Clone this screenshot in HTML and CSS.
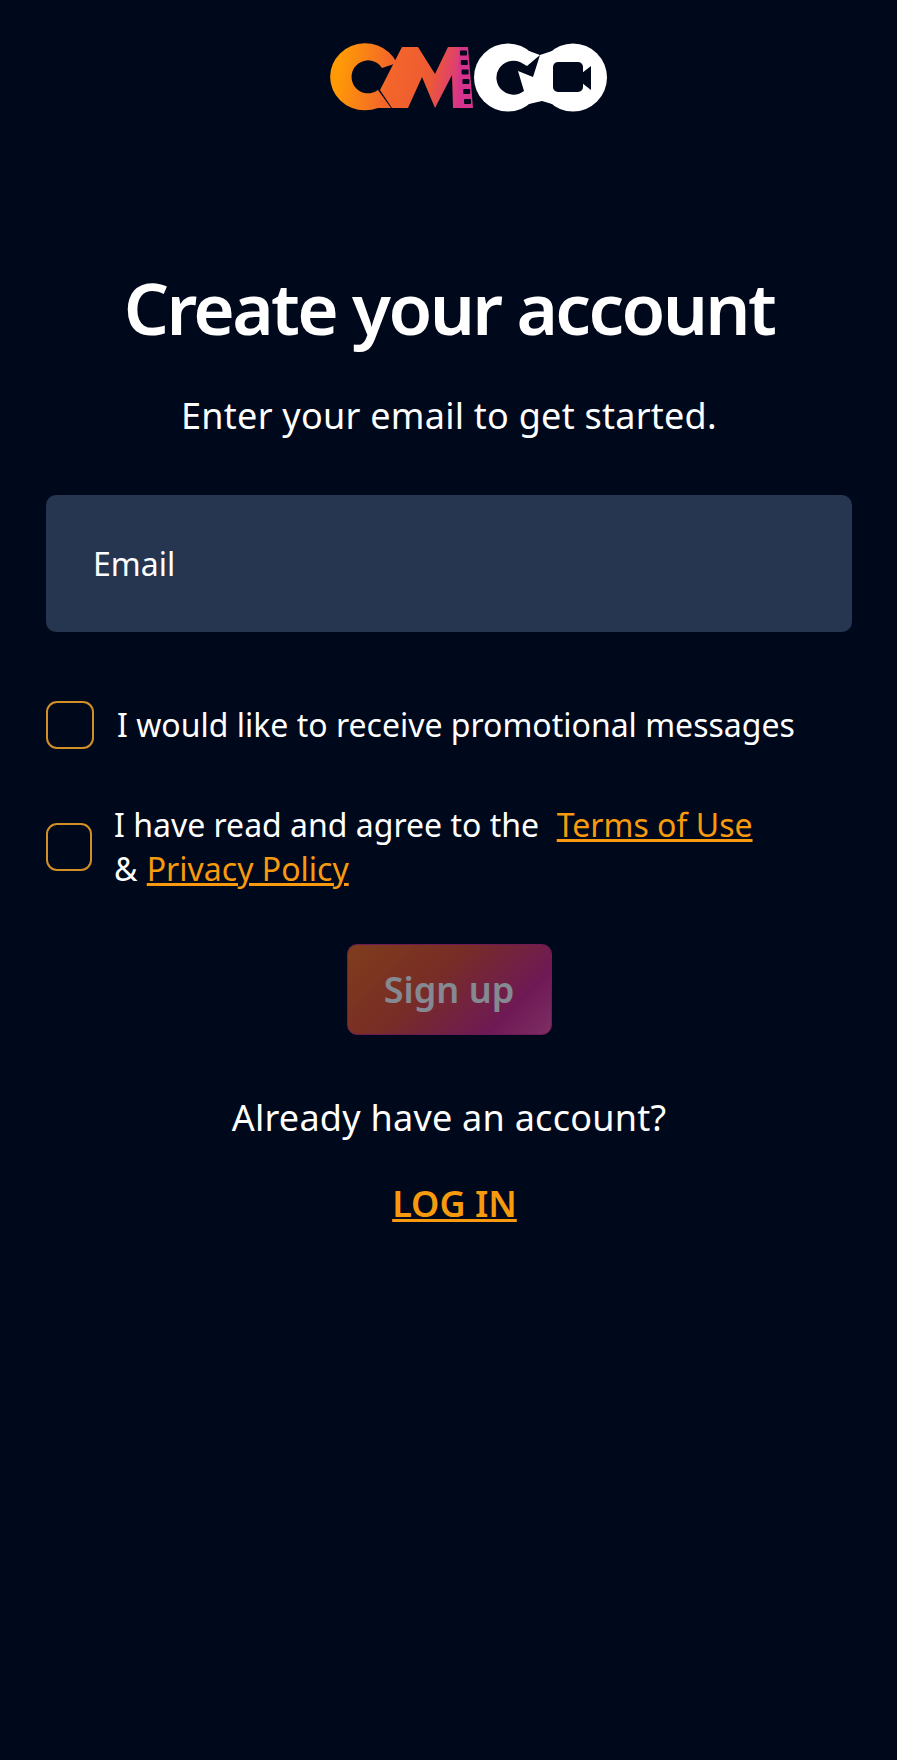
FILE: index.html
```html
<!DOCTYPE html>
<html lang="en">
<head>
<meta charset="utf-8">
<title>Create your account</title>
<link rel="stylesheet" href="styles.css">
</head>
<body>
<main class="page">
  <header class="logo-row">
    <svg class="logo" width="278" height="70" viewBox="0 0 278 70" role="img" aria-label="CMGO">
      <defs>
        <linearGradient id="lg" gradientUnits="userSpaceOnUse" x1="10" y1="20" x2="134" y2="42">
          <stop offset="0" stop-color="#ff9a05"/>
          <stop offset="0.4" stop-color="#f3662a"/>
          <stop offset="0.72" stop-color="#ee5a33"/>
          <stop offset="1" stop-color="#d6338c"/>
        </linearGradient>
      </defs>
      <path fill="url(#lg)" d="M67 20A35 33.500 0 1 0 48 65L61 65L48 47A16.500 16.500 0 1 1 52 25Z"/>
      <path fill="url(#lg)" d="M72 4H88L105 31L118 4H131V65H123L122 32L105 65L92 34L78 65H62L50 47Z"/>
      <path class="strip" d="M129 4H138L143 65H128Z"/>
      <g class="logo-cut">
        <rect x="130" y="7.500" width="7" height="5" rx="1"/>
        <rect x="130.800" y="17" width="7" height="5" rx="1"/>
        <rect x="131.600" y="26.500" width="7" height="5" rx="1"/>
        <rect x="132.400" y="36" width="7" height="5" rx="1"/>
        <rect x="133.200" y="46" width="7" height="5" rx="1"/>
        <rect x="134" y="56" width="7" height="5" rx="1"/>
      </g>
      <g class="logo-white">
        <circle cx="178" cy="34.500" r="34"/>
        <circle cx="243" cy="34.500" r="34"/>
        <path d="M199 8L210 12L222 8V61L212 58L199 61Z"/>
      </g>
      <g class="logo-cut">
        <path d="M194 48A17 17 0 1 1 190 19L197 23L210 12L203 34L188 28Z"/>
        <rect x="223" y="19" width="30" height="30" rx="5"/>
        <path d="M252 30L261 23V47L252 40Z"/>
      </g>
    </svg>
  </header>

  <h1 class="title">Create your account</h1>
  <p class="subtitle">Enter your email to get started.</p>

  <form class="form">
    <div class="field"><span class="field-label">Email</span></div>

    <div class="check-row check-row-one">
      <span class="box box-one"></span>
      <span class="check-text">I would like to receive promotional messages</span>
    </div>

    <div class="check-row check-row-two">
      <span class="box box-two"></span>
      <span class="check-text">I have read and agree to the &nbsp;<a class="link" href="#">Terms of Use</a><br>&amp; <a class="link" href="#">Privacy Policy</a></span>
    </div>

    <div class="actions"><button class="signup" type="button" disabled>Sign up</button></div>
  </form>

  <p class="already">Already have an account?</p>
  <p class="login-row"><a class="login" href="#">LOG IN</a></p>
</main>
</body>
</html>
```
FILE: styles.css
```css
* { box-sizing: border-box; }
html, body { margin: 0; padding: 0; }
body {
  background: #00081b;
  color: #fff;
  font-family: "Noto Sans", sans-serif;
  min-height: 1760px;
}
.page { padding: 43px 45px 0 46px; display: flex; flex-direction: column; }
.logo-row { display: flex; justify-content: center; padding-left: 40px; height: 70px; }
.logo { display: block; }
.strip { fill: #d6338c; }
.logo-cut { fill: #00081b; }
.logo-white { fill: #fff; }
.title {
  margin: 150px 0 0;
  text-align: center;
  font-size: 71px;
  line-height: 90px;
  font-weight: 600;
  letter-spacing: -2.6px;
}
.subtitle { margin: 38px 0 0; text-align: center; font-size: 36px; line-height: 50px; letter-spacing: 0.25px; }
.form { margin-top: 54px; display: flex; flex-direction: column; }
.field {
  height: 137px;
  background: #263650;
  border-radius: 10px;
  padding-left: 47px;
  display: flex;
  align-items: center;
  font-size: 32px;
}
.check-row { display: flex; align-items: center; }
.check-row-one { margin-top: 69px; gap: 23px; }
.check-row-two { margin-top: 54px; gap: 22px; }
.box { display: block; flex: none; border: 2px solid #d18f26; border-radius: 11px; }
.box-one { width: 48px; height: 48px; }
.box-two { width: 46px; height: 48px; }
.check-text { font-size: 32px; line-height: 44px; }
.link { color: #f79a0e; margin-left: 1px; }
.actions { display: flex; justify-content: center; margin-top: 53px; }
.signup {
  width: 205px;
  height: 91px;
  border: 1px solid #d4308e;
  border-radius: 10px;
  background: linear-gradient(135deg, #f46e1e 0%, #e6502f 40%, #d42a8a 78%, #fa5ab0 105%);
  color: #fff;
  font: 600 36px "Noto Sans", sans-serif;
  opacity: 0.52;
}
.already { margin: 58px 0 0; text-align: center; font-size: 36px; line-height: 50px; letter-spacing: 0.25px; }
.login-row { margin: 36px 0 0; text-align: center; padding-left: 11px; font-size: 36px; line-height: 50px; }
.login { color: #f79a0e; font-weight: 600; }
```
